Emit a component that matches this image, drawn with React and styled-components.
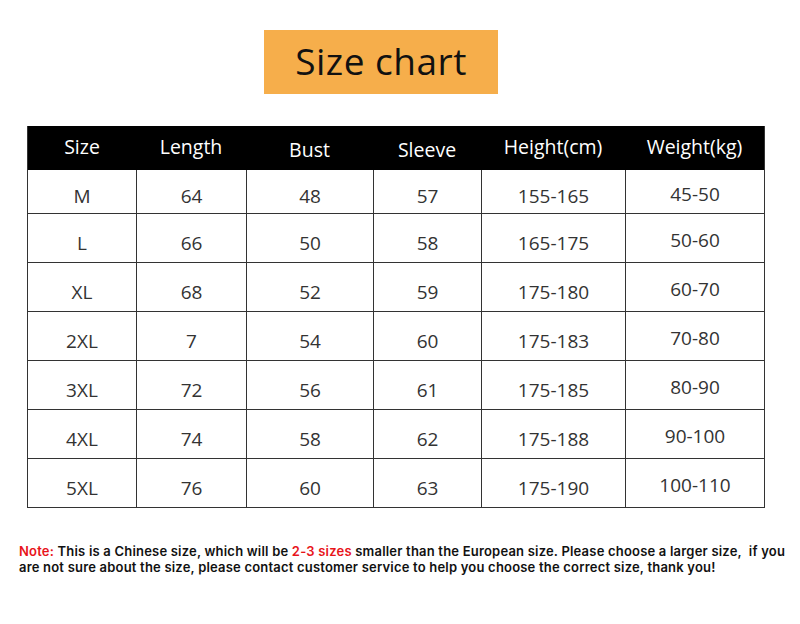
import React from "react";
import styled, { createGlobalStyle } from "styled-components";

const GlobalStyle = createGlobalStyle`
  body {
    margin: 0;
    background: #fff;
    font-family: "Open Sans", "Noto Sans", sans-serif;
  }
`;

const Page = styled.div`
  width: 800px;
  height: 624px;
  display: flex;
  flex-direction: column;
  align-items: flex-start;
  padding-top: 30px;
  box-sizing: border-box;
  overflow: hidden;
`;

const TitleBox = styled.div`
  margin-left: 264px;
  width: 234px;
  height: 64px;
  padding-bottom: 3px;
  box-sizing: border-box;
  background: #f6ae4b;
  display: flex;
  align-items: center;
  justify-content: center;
  font-size: 37px;
  color: #111;
  letter-spacing: 0.5px;
`;

const Table = styled.div`
  margin-top: 32px;
  margin-left: 27px;
  display: grid;
  grid-template-columns: 108px 110px 127px 108px 144px 139px;
  grid-template-rows: 44px 43px repeat(6, 49px);
  border-right: 1.5px solid #333;
  border-bottom: 1.5px solid #333;
  border-left: 1.5px solid #333;
`;

const HeadCell = styled.div`
  background: #000;
  color: #fff;
  font-size: 19.5px;
  display: flex;
  align-items: center;
  justify-content: center;
  padding-top: ${(p) => p.$drop || 0}px;
  padding-bottom: 4px;
`;

const Cell = styled.div`
  display: flex;
  align-items: center;
  justify-content: center;
  font-size: 19px;
  color: #333;
  border-top: ${(p) => (p.$first ? "none" : "1.5px solid #333")};
  border-left: ${(p) => (p.$col === 0 ? "none" : "1.5px solid #333")};
  padding-top: ${(p) => p.$drop}px;
`;

const Note = styled.div`
  margin-top: 35px;
  margin-left: 19px;
  font-family: Inter, "Open Sans", sans-serif;
  font-size: 13px;
  font-weight: 600;
  line-height: 16px;
  letter-spacing: 0.2px;
  color: #111;
  white-space: nowrap;
`;

const Red = styled.span`
  color: #e8141b;
`;

const headers = ["Size", "Length", "Bust", "Sleeve", "Height(cm)", "Weight(kg)"];
const drops = [0, 0, 6, 6, 0, 0];

const rows = [
  ["M", "64", "48", "57", "155-165", "45-50"],
  ["L", "66", "50", "58", "165-175", "50-60"],
  ["XL", "68", "52", "59", "175-180", "60-70"],
  ["2XL", "7", "54", "60", "175-183", "70-80"],
  ["3XL", "72", "56", "61", "175-185", "80-90"],
  ["4XL", "74", "58", "62", "175-188", "90-100"],
  ["5XL", "76", "60", "63", "175-190", "100-110"],
];

export default function App() {
  return (
    <>
      <GlobalStyle />
      <Page>
        <TitleBox>Size chart</TitleBox>
        <Table>
          {headers.map((h, i) => (
            <HeadCell key={h} $drop={drops[i]}>
              {h}
            </HeadCell>
          ))}
          {rows.map((r, ri) =>
            r.map((v, ci) => (
              <Cell key={ri + "-" + ci} $first={ri === 0} $col={ci} $drop={ci === 5 ? 4 : 9}>
                {v}
              </Cell>
            ))
          )}
        </Table>
        <Note>
          <Red>Note:</Red> This is a Chinese size, which will be <Red>2-3 sizes</Red> smaller than
          the European size. Please choose a larger size,&nbsp; if you
          <br />
          are not sure about the size, please contact customer service to help you choose the
          correct size, thank you!
        </Note>
      </Page>
    </>
  );
}
